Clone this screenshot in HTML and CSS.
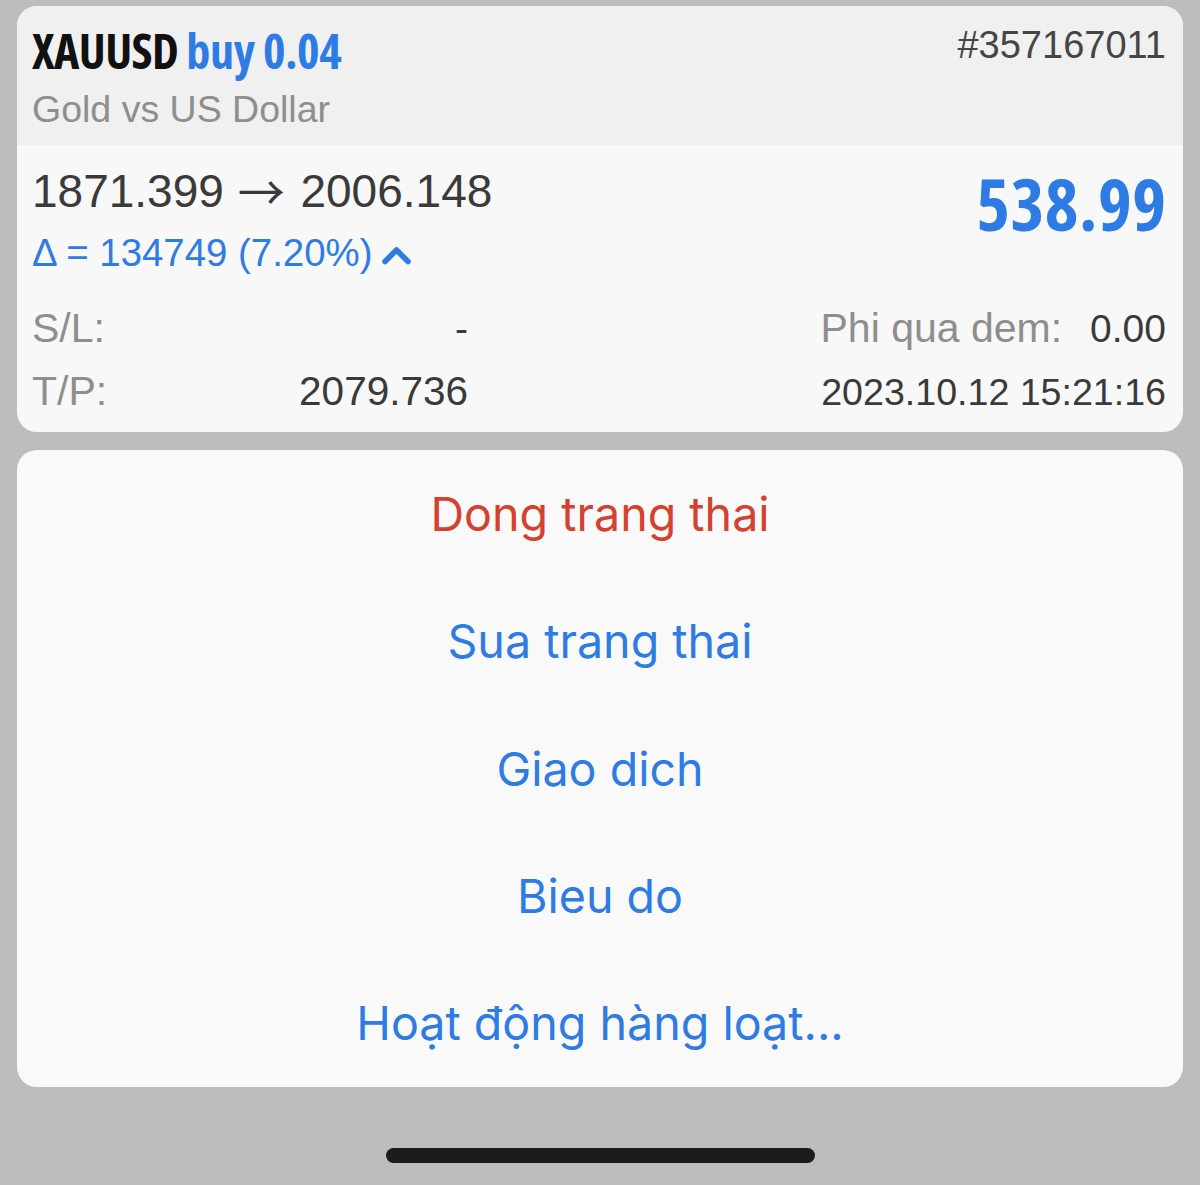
FILE: index.html
```html
<!DOCTYPE html>
<html lang="vi">
<head>
<meta charset="utf-8">
<link rel="stylesheet" href="styles.css">
</head>
<body>
<div class="screen">
  <section class="card">
    <header class="head">
      <div class="head-left">
        <div class="title"><span class="sym">XAUUSD</span> <span class="side">buy 0.04</span></div>
        <div class="sub">Gold vs US Dollar</div>
      </div>
      <div class="ticket">#357167011</div>
    </header>
    <div class="body">
      <div class="row-top">
        <div class="left-col">
          <div class="prices">1871.399 <span class="arrow">→</span> 2006.148</div>
          <div class="delta"><span>Δ = 134749 (7.20%)</span>
            <svg class="chev" width="29" height="20" viewBox="0 0 29 20"><polyline points="3,16.5 14.5,5 26,16.5" fill="none" stroke="#2f7be6" stroke-width="5.5" stroke-linecap="round" stroke-linejoin="round"/></svg>
          </div>
        </div>
        <div class="profit">538.99</div>
      </div>
      <div class="details">
        <div class="drow">
          <div class="pair"><span class="lbl">S/L:</span><span class="val">-</span></div>
          <div class="right"><span class="lbl">Phi qua dem:</span><span class="val swap">0.00</span></div>
        </div>
        <div class="drow">
          <div class="pair"><span class="lbl">T/P:</span><span class="val tp">2079.736</span></div>
          <div class="right"><span class="val date">2023.10.12 15:21:16</span></div>
        </div>
      </div>
    </div>
  </section>
  <nav class="menu">
    <div class="item danger">Dong trang thai</div>
    <div class="item">Sua trang thai</div>
    <div class="item">Giao dich</div>
    <div class="item">Bieu do</div>
    <div class="item">Hoạt động hàng loạt...</div>
  </nav>
  <div class="home-wrap"><div class="home-bar"></div></div>
</div>
</body>
</html>
```
FILE: styles.css
```css
html, body {
  margin: 0;
  padding: 0;
  background: #bdbdbd;
}
.screen {
  width: 1200px;
  height: 1185px;
  padding-top: 6px;
  box-sizing: border-box;
  font-family: "Liberation Sans", Arial, sans-serif;
}
.card {
  margin: 0 17px;
  border-radius: 20px;
  overflow: hidden;
  background: #f8f8f8;
  height: 426px;
}
.head {
  background: #f0f0f0;
  height: 139px;
  box-sizing: border-box;
  padding: 20px 17px 0 15px;
  display: flex;
  justify-content: space-between;
  align-items: flex-start;
}
.title {
  font-family: "Open Sans", sans-serif;
  font-stretch: 75%;
  font-weight: 700;
  font-size: 48px;
  line-height: 50px;
  letter-spacing: -0.6px;
}
.sym { color: #111; }
.side { color: #2f7be6; letter-spacing: -0.3px; }
.sub {
  font-size: 37.5px;
  line-height: 44px;
  color: #8e8e8e;
  margin-top: 11px;
}
.ticket {
  font-size: 38px;
  line-height: 44px;
  color: #454545;
  margin-top: -3px;
}
.body {
  padding: 18px 17px 0 15px;
}
.row-top {
  display: flex;
  justify-content: space-between;
  align-items: flex-start;
}
.prices {
  font-size: 46px;
  line-height: 56px;
  color: #3a3a3a;
  white-space: nowrap;
}
.arrow {
  font-family: "Noto Sans CJK SC", "DejaVu Sans", sans-serif;
  font-size: 47px;
  display: inline-block;
  margin: 0 3px 0 1px;
  vertical-align: top;
  line-height: 54px;
}
.delta {
  font-size: 38.4px;
  line-height: 48px;
  color: #2f7be6;
  margin-top: 10px;
  display: flex;
  align-items: center;
  gap: 10px;
}
.chev { margin-top: 4px; }
.profit {
  font-family: "Open Sans", sans-serif;
  font-stretch: 75%;
  font-weight: 700;
  font-size: 72px;
  line-height: 80px;
  color: #2f7be6;
  margin-top: 0;
  letter-spacing: 0.5px;
  margin-right: -0.5px;
}
.details {
  margin-top: 20px;
}
.drow {
  display: flex;
  justify-content: space-between;
  align-items: baseline;
  font-size: 39px;
  line-height: 63px;
}
.pair {
  width: 436px;
  display: flex;
  justify-content: space-between;
  align-items: baseline;
}
.lbl { color: #8e8e8e; font-size: 41px; }
.val { color: #3a3a3a; }
.tp { font-size: 40.5px; }
.date { font-size: 37.6px; }
.swap { margin-left: 28px; }
.menu {
  margin: 18px 17px 0;
  height: 637px;
  border-radius: 20px;
  background: #f9f9f9;
  display: flex;
  flex-direction: column;
}
.item {
  flex: 1;
  display: flex;
  align-items: center;
  justify-content: center;
  font-family: Inter, "Noto Sans", sans-serif;
  font-size: 46.6px;
  color: #2f7be6;
}
.item.danger { color: #d5412f; }
.home-wrap {
  display: flex;
  justify-content: center;
  padding-top: 61px;
}
.home-bar {
  width: 429px;
  height: 15px;
  border-radius: 8px;
  background: #1c1c1c;
  margin-left: 1px;
}
```
